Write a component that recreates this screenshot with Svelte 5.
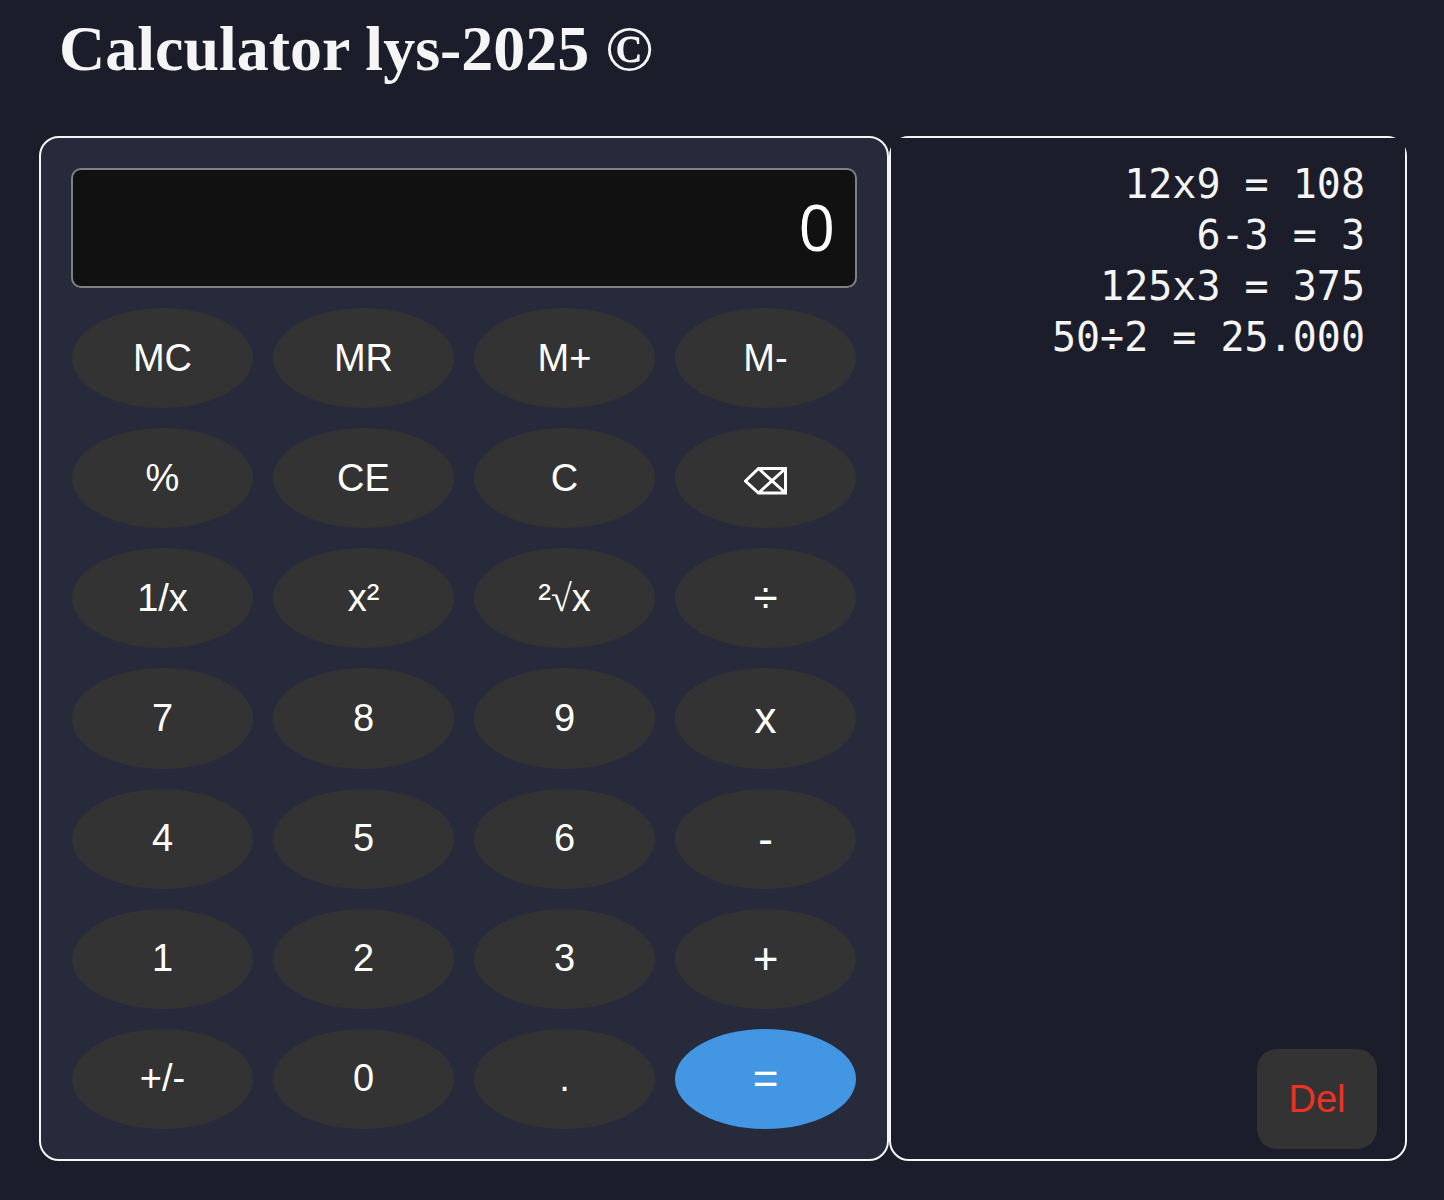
<script>
  const keys = [
    'MC', 'MR', 'M+', 'M-',
    '%', 'CE', 'C', 'back',
    '1/x', 'x²', '²√x', '÷',
    '7', '8', '9', 'x',
    '4', '5', '6', '-',
    '1', '2', '3', '+',
    '+/-', '0', '.', '='
  ];
  const operators = ['÷', 'x', '-', '+', '='];

  let display = $state('0');
  let pending = $state(null);
  let fresh = $state(true);
  let memory = $state(0);
  let history = $state(['12x9 = 108', '6-3 = 3', '125x3 = 375', '50÷2 = 25.000']);

  function show(value) {
    display = String(value);
    fresh = true;
  }

  function compute(a, op, b) {
    if (op === '÷') return a / b;
    if (op === 'x') return a * b;
    if (op === '-') return a - b;
    return a + b;
  }

  function press(key) {
    const value = Number(display);
    if (/^\d$/.test(key)) {
      display = fresh ? key : display + key;
      fresh = false;
    } else if (key === '.') {
      if (fresh) display = '0.';
      else if (!display.includes('.')) display += '.';
      fresh = false;
    } else if (key === '=') {
      if (!pending) return;
      const result = compute(pending.value, pending.op, value);
      history.push(`${pending.value}${pending.op}${value} = ${result}`);
      pending = null;
      show(result);
    } else if (operators.includes(key)) {
      pending = { value, op: key };
      fresh = true;
    } else if (key === 'back') {
      display = display.length > 1 ? display.slice(0, -1) : '0';
      fresh = display === '0';
    } else if (key === 'C') {
      pending = null;
      show(0);
    } else if (key === 'CE') show(0);
    else if (key === '%') show(value / 100);
    else if (key === '1/x') show(1 / value);
    else if (key === 'x²') show(value * value);
    else if (key === '²√x') show(Math.sqrt(value));
    else if (key === '+/-') show(-value);
    else if (key === 'MC') memory = 0;
    else if (key === 'MR') show(memory);
    else if (key === 'M+') memory += value;
    else if (key === 'M-') memory -= value;
  }
</script>

<div class="page">
  <h1>Calculator lys-2025 ©</h1>
  <main>
    <section class="calculator">
      <input class="display" type="text" aria-label="Result" readonly value={display} />
      <div class="keys">
        {#each keys as key}
          <button
            type="button"
            class:operator={operators.includes(key)}
            class:equals={key === '='}
            aria-label={key === 'back' ? 'Backspace' : undefined}
            onclick={() => press(key)}
          >
            {#if key === 'back'}
              <svg viewBox="0 0 44 28" width="44" height="28" aria-hidden="true">
                <path d="M1.5 14 14.5 1.5H41.5V26H14.5ZM14.5 1.5 41.5 26M41.5 1.5 14.5 26" />
              </svg>
            {:else if key === '²√x'}
              <span>²<span class="radical">√</span>x</span>
            {:else}{key}{/if}
          </button>
        {/each}
      </div>
    </section>
    <section class="history" aria-label="History">
      <ul>
        {#each history as entry}
          <li>{entry}</li>
        {/each}
      </ul>
      <button type="button" class="delete" onclick={() => (history = [])}>Del</button>
    </section>
  </main>
</div>

<style>
  :global(body) {
    margin: 0;
    background: #1b1d2a;
  }
  .page {
    box-sizing: border-box;
    display: flex;
    flex-direction: column;
    min-height: 100vh;
    padding: 12px 37px 39px 39px;
    color: #f5f5f5;
  }
  h1 {
    margin: 0 0 50px;
    padding-left: 20px;
    font: bold 64px/74px 'Liberation Serif', serif;
  }
  main {
    display: grid;
    flex: 1;
    grid-template-columns: 850fr 518fr;
  }
  section {
    box-sizing: border-box;
    min-width: 0;
    border: 2px solid #f5f5f5;
    border-radius: 20px;
  }
  .calculator {
    display: flex;
    flex-direction: column;
    gap: 20px;
    padding: 30px;
    background: #272a3b;
  }
  .display {
    box-sizing: border-box;
    width: 100%;
    height: 120px;
    padding: 0 20px 4px;
    border: 2px solid #808080;
    border-radius: 10px;
    outline: none;
    background: #111;
    color: #fff;
    font: 64px 'Open Sans', sans-serif;
    text-align: right;
  }
  .keys {
    display: grid;
    flex: 1;
    grid-template-columns: repeat(4, 1fr);
    grid-auto-rows: 1fr;
    gap: 20px;
    padding: 0 1px;
  }
  button {
    display: flex;
    align-items: center;
    justify-content: center;
    min-height: 100px;
    padding: 0;
    border: 0;
    border-radius: 50%;
    background: #333;
    color: #fff;
    font: 38px 'Liberation Sans', Arial, sans-serif;
    cursor: pointer;
  }
  .operator {
    font-size: 44px;
  }
  .equals {
    background: #4296e2;
  }
  .radical {
    font-family: 'Liberation Serif', serif;
  }
  svg {
    margin-top: 6px;
    fill: none;
    stroke: #fff;
    stroke-width: 3;
  }
  .history {
    display: flex;
    flex-direction: column;
    justify-content: space-between;
  }
  ul {
    margin: 0;
    padding: 21px 40px 20px;
    background: #1b1d2a;
    list-style: none;
    font: 40px/51px 'DejaVu Sans Mono', monospace;
    text-align: right;
  }
  .delete {
    align-self: flex-end;
    width: 120px;
    margin: 0 28px 10px;
    border-radius: 20px;
    color: #ea3323;
  }
</style>
